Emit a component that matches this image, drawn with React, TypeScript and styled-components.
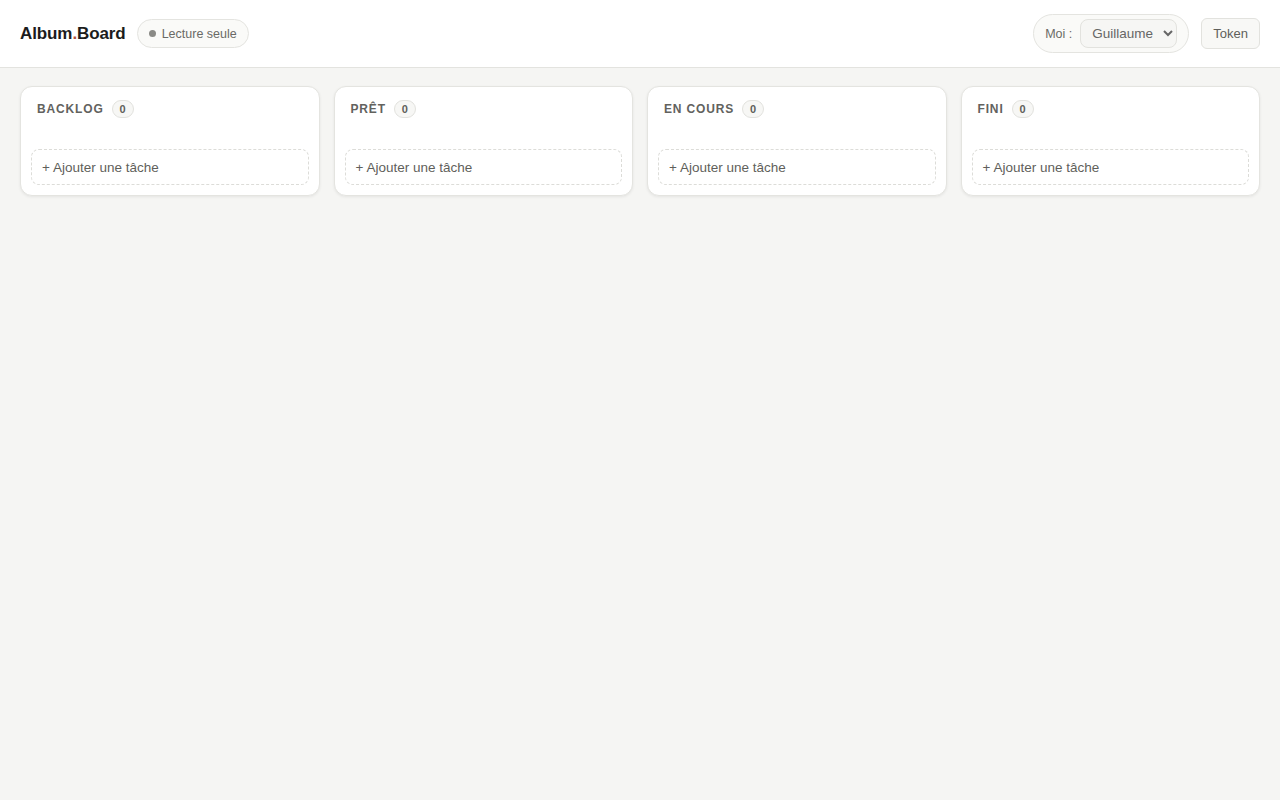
import React from "react";
import styled, { createGlobalStyle } from "styled-components";

type Column = { id: string; title: string; tasks: string[] };

const columns: Column[] = [
  { id: "backlog", title: "Backlog", tasks: [] },
  { id: "ready", title: "Prêt", tasks: [] },
  { id: "doing", title: "En cours", tasks: [] },
  { id: "done", title: "Fini", tasks: [] },
];

const GlobalStyle = createGlobalStyle`
  * { box-sizing: border-box; }
  html, body {
    margin: 0;
    padding: 0;
    background: #f5f5f3;
    font-family: "Liberation Sans", Arial, sans-serif;
    color: #1f1f1f;
  }
`;

export default function App() {
  return (
    <>
      <GlobalStyle />
      <Page>
        <TopBar>
          <Brand>
            <Logo>
              Album<Dot>.</Dot>Board
            </Logo>
            <StatusPill>
              <StatusDot />
              Lecture seule
            </StatusPill>
          </Brand>

          <Actions>
            <UserPicker>
              <PickerLabel>Moi :</PickerLabel>
              <UserSelect defaultValue="guillaume">
                <option value="guillaume">Guillaume</option>
              </UserSelect>
            </UserPicker>
            <GhostButton>Token</GhostButton>
          </Actions>
        </TopBar>

        <Board>
          {columns.map((col) => (
            <Lane key={col.id}>
              <LaneHeader>
                <LaneTitle>{col.title}</LaneTitle>
                <Count>{col.tasks.length}</Count>
              </LaneHeader>
              <TaskList />
              <AddTask>+ Ajouter une tâche</AddTask>
            </Lane>
          ))}
        </Board>
      </Page>
    </>
  );
}

/* Styled components */
const Page = styled.div`
  min-height: 100vh;
  background: #f5f5f3;
`;

const TopBar = styled.header`
  height: 68px;
  display: flex;
  align-items: center;
  justify-content: space-between;
  padding: 0 20px;
  background: #ffffff;
  border-bottom: 1px solid #e3e3df;
`;

const Brand = styled.div`
  display: flex;
  align-items: center;
  gap: 11px;
`;

const Logo = styled.div`
  font-size: 17px;
  font-weight: 700;
  color: #1c1c1c;
  letter-spacing: -0.1px;
`;

const Dot = styled.span`
  color: #b0523c;
`;

const StatusPill = styled.span`
  display: inline-flex;
  align-items: center;
  gap: 6px;
  height: 29px;
  padding: 0 11px;
  border: 1px solid #e4e4e0;
  border-radius: 999px;
  background: #fafaf8;
  font-size: 12.5px;
  color: #6a6a66;
`;

const StatusDot = styled.span`
  width: 7px;
  height: 7px;
  border-radius: 50%;
  background: #8a8a86;
`;

const Actions = styled.div`
  display: flex;
  align-items: center;
  gap: 12px;
`;

const UserPicker = styled.div`
  display: flex;
  align-items: center;
  gap: 8px;
  height: 39px;
  padding: 0 11px;
  border: 1px solid #e4e4e0;
  border-radius: 999px;
  background: #fafaf8;
`;

const PickerLabel = styled.span`
  font-size: 12.5px;
  color: #6a6a66;
`;

const UserSelect = styled.select`
  width: 97px;
  height: 29px;
  padding: 0 4px 0 7px;
  border: 1px solid #e2e2de;
  border-radius: 8px;
  background: #f6f6f4;
  font-family: inherit;
  font-size: 13.5px;
  color: #666;
`;

const GhostButton = styled.button`
  height: 31px;
  padding: 0 11px;
  border: 1px solid #e2e2de;
  border-radius: 6px;
  background: #f8f8f6;
  font-family: inherit;
  font-size: 13px;
  color: #5f5f5b;
  cursor: pointer;
`;

const Board = styled.main`
  display: grid;
  grid-template-columns: repeat(4, 1fr);
  gap: 14px;
  padding: 18px 20px;
  align-items: start;
`;

const Lane = styled.section`
  display: flex;
  flex-direction: column;
  background: #ffffff;
  border: 1px solid #e4e4e0;
  border-radius: 12px;
  box-shadow: 0 1px 3px rgba(0, 0, 0, 0.07);
  padding-bottom: 10px;
`;

const LaneHeader = styled.div`
  display: flex;
  align-items: center;
  gap: 8px;
  padding: 13px 16px 0;
`;

const LaneTitle = styled.h2`
  margin: 0;
  font-size: 12px;
  font-weight: 700;
  letter-spacing: 0.85px;
  text-transform: uppercase;
  color: #62625e;
`;

const Count = styled.span`
  display: inline-flex;
  align-items: center;
  justify-content: center;
  min-width: 22px;
  height: 18px;
  padding: 0 6px;
  border: 1px solid #e2e2de;
  border-radius: 999px;
  background: #f7f7f5;
  font-size: 11px;
  font-weight: 700;
  color: #5f5f5b;
`;

const TaskList = styled.div`
  min-height: 31px;
`;

const AddTask = styled.button`
  margin: 0 10px;
  height: 36px;
  padding: 0 10px;
  text-align: left;
  border: 1px dashed #dcdcd8;
  border-radius: 8px;
  background: #ffffff;
  font-family: inherit;
  font-size: 13.5px;
  color: #5f5f5b;
  cursor: pointer;
`;
